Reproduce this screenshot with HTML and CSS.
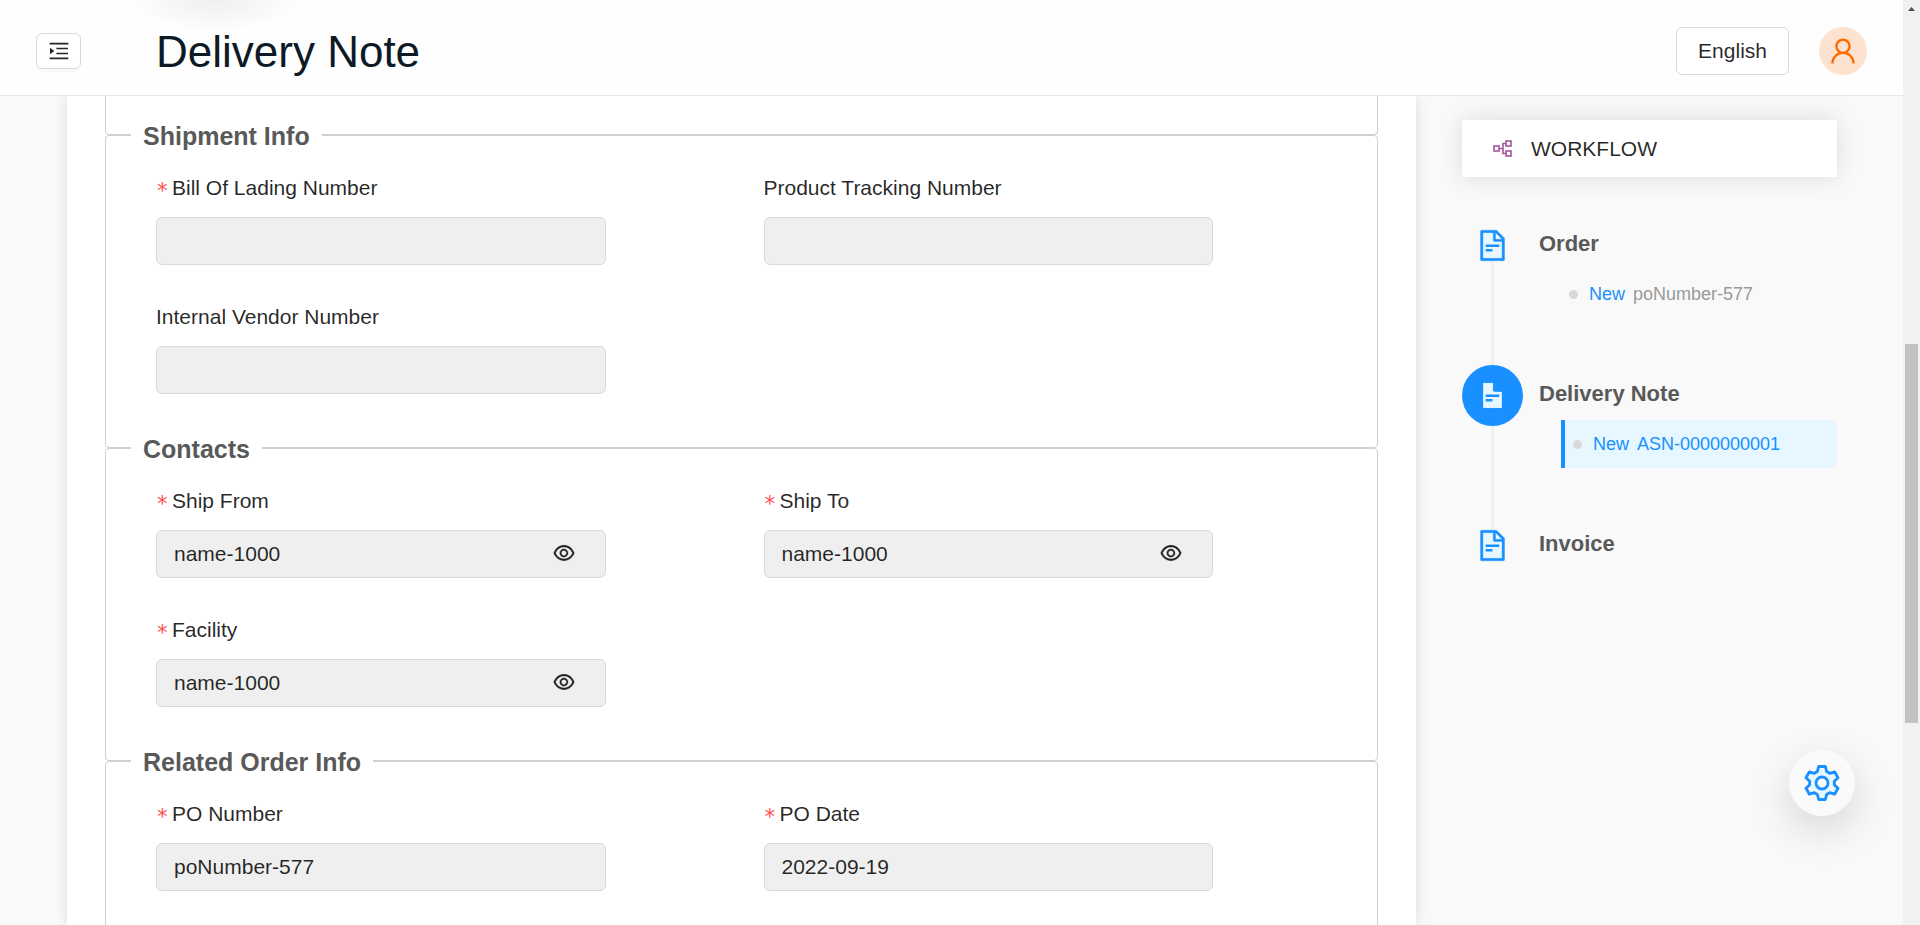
FILE: index.html
```html
<!DOCTYPE html>
<html lang="en">
<head>
    <meta charset="UTF-8">
    <meta name="viewport" content="width=device-width, initial-scale=1.0">
    <title>Delivery Note</title>
    <link rel="stylesheet" href="styles.css">
</head>
<body>
    <!-- shared icons -->
    <svg class="icon-defs" aria-hidden="true">
        <symbol id="icon-file" viewBox="0 0 1024 1024">
            <path fill="#e6f7ff" d="M534 352V136H232v752h560V394H576a42 42 0 01-42-42z"/>
            <path fill="#1890ff" stroke="#1890ff" stroke-width="10" d="M854.6 288.6L639.4 73.4c-6-6-14.1-9.4-22.6-9.4H192c-17.7 0-32 14.3-32 32v832c0 17.7 14.3 32 32 32h640c17.7 0 32-14.3 32-32V311.3c0-8.5-3.4-16.7-9.4-22.7zM602 137.8L790.2 326H602V137.8zM792 888H232V136h302v216a42 42 0 0042 42h216v494z"/>
            <path fill="#1890ff" d="M320 482h384c4.4 0 8 3.6 8 8v56c0 4.4-3.6 8-8 8H320c-4.4 0-8-3.6-8-8v-56c0-4.4 3.6-8 8-8zM320 618h184c4.4 0 8 3.6 8 8v56c0 4.4-3.6 8-8 8H320c-4.4 0-8-3.6-8-8v-56c0-4.4 3.6-8 8-8z"/>
        </symbol>
        <symbol id="icon-eye" viewBox="0 0 1024 1024">
            <path fill="currentColor" stroke="currentColor" stroke-width="14" d="M942.2 486.2C847.4 286.5 704.1 186 512 186c-192.2 0-335.4 100.5-430.2 300.3a60.3 60.3 0 000 51.5C176.6 737.5 319.9 838 512 838c192.2 0 335.4-100.5 430.2-300.3 7.7-16.2 7.7-35 0-51.5zM512 766c-161.3 0-279.4-81.8-362.7-254C232.6 339.8 350.7 258 512 258c161.3 0 279.4 81.8 362.7 254C791.5 684.2 673.4 766 512 766zm-4-430c-97.2 0-176 78.8-176 176s78.8 176 176 176 176-78.8 176-176-78.8-176-176-176zm0 288c-61.9 0-112-50.1-112-112s50.1-112 112-112 112 50.1 112 112-50.1 112-112 112z"/>
        </symbol>
    </svg>

    <div class="app">
        <header class="header">
            <button type="button" class="menu-btn" aria-label="Toggle menu">
                <svg class="menu-icon" viewBox="0 0 1024 1024">
                    <path fill="currentColor" d="M408 442h480c4.4 0 8-3.6 8-8v-56c0-4.4-3.6-8-8-8H408c-4.4 0-8 3.6-8 8v56c0 4.4 3.6 8 8 8zm-8 204c0 4.4 3.6 8 8 8h480c4.4 0 8-3.6 8-8v-56c0-4.4-3.6-8-8-8H408c-4.4 0-8 3.6-8 8v56zm504-486H120c-4.4 0-8 3.6-8 8v56c0 4.4 3.6 8 8 8h784c4.4 0 8-3.6 8-8v-56c0-4.4-3.6-8-8-8zm0 632H120c-4.4 0-8 3.6-8 8v56c0 4.4 3.6 8 8 8h784c4.4 0 8-3.6 8-8v-56c0-4.4-3.6-8-8-8zM142.4 642.1L298.7 519a8.84 8.84 0 000-13.9L142.4 381.9c-5.8-4.6-14.4-.5-14.4 6.9v246.3a8.9 8.9 0 0014.4 7z"/>
                </svg>
            </button>
            <h1 class="page-title">Delivery Note</h1>
            <button type="button" class="lang-btn">English</button>
            <button type="button" class="avatar" aria-label="Account">
                <svg class="avatar-icon" viewBox="0 0 1024 1024">
                    <path fill="currentColor" d="M858.5 763.6a374 374 0 00-80.6-119.5 375.63 375.63 0 00-119.5-80.6c-.4-.2-.8-.3-1.2-.5C719.5 518 760 444.7 760 362c0-137-111-248-248-248S264 225 264 362c0 82.7 40.5 156 102.8 201.1-.4.2-.8.3-1.2.5-44.8 18.9-85 46-119.5 80.6a375.63 375.63 0 00-80.6 119.5A371.7 371.7 0 00136 901.8a8 8 0 008 8.2h60c4.4 0 7.9-3.5 8-7.8 2-77.2 33-149.5 87.8-204.3 56.7-56.7 132-87.9 212.2-87.9s155.5 31.2 212.2 87.9C779 752.7 810 825 812 902.2c.1 4.4 3.6 7.8 8 7.8h60a8 8 0 008-8.2c-1-47.8-10.9-94.3-29.5-138.2zM512 534c-45.9 0-89.1-17.9-121.6-50.4S340 407.9 340 362c0-45.9 17.9-89.1 50.4-121.6S466.1 190 512 190s89.1 17.9 121.6 50.4S684 316.1 684 362c0 45.9-17.9 89.1-50.4 121.6S557.9 534 512 534z"/>
                </svg>
            </button>
        </header>

        <div class="content">
            <main class="sheet">
                <form>
                    <div class="section-end"></div>

                    <fieldset class="section">
                        <legend class="section-title">Shipment Info</legend>
                        <div class="fields">
                            <div class="field">
                                <label class="field-label" for="bol"><span class="required">*</span>Bill Of Lading Number</label>
                                <input type="text" class="field-input" id="bol" readonly>
                            </div>
                            <div class="field">
                                <label class="field-label" for="tracking">Product Tracking Number</label>
                                <input type="text" class="field-input" id="tracking" readonly>
                            </div>
                            <div class="field">
                                <label class="field-label" for="vendor">Internal Vendor Number</label>
                                <input type="text" class="field-input" id="vendor" readonly>
                            </div>
                        </div>
                    </fieldset>

                    <fieldset class="section">
                        <legend class="section-title">Contacts</legend>
                        <div class="fields">
                            <div class="field">
                                <label class="field-label" for="shipFrom"><span class="required">*</span>Ship From</label>
                                <div class="field-control">
                                    <input type="text" class="field-input" id="shipFrom" value="name-1000" readonly>
                                    <button type="button" class="view-btn" aria-label="View ship from"><svg class="eye-icon"><use href="#icon-eye"/></svg></button>
                                </div>
                            </div>
                            <div class="field">
                                <label class="field-label" for="shipTo"><span class="required">*</span>Ship To</label>
                                <div class="field-control">
                                    <input type="text" class="field-input" id="shipTo" value="name-1000" readonly>
                                    <button type="button" class="view-btn" aria-label="View ship to"><svg class="eye-icon"><use href="#icon-eye"/></svg></button>
                                </div>
                            </div>
                            <div class="field">
                                <label class="field-label" for="facility"><span class="required">*</span>Facility</label>
                                <div class="field-control">
                                    <input type="text" class="field-input" id="facility" value="name-1000" readonly>
                                    <button type="button" class="view-btn" aria-label="View facility"><svg class="eye-icon"><use href="#icon-eye"/></svg></button>
                                </div>
                            </div>
                        </div>
                    </fieldset>

                    <fieldset class="section">
                        <legend class="section-title">Related Order Info</legend>
                        <div class="fields">
                            <div class="field">
                                <label class="field-label" for="poNumber"><span class="required">*</span>PO Number</label>
                                <input type="text" class="field-input" id="poNumber" value="poNumber-577" readonly>
                            </div>
                            <div class="field">
                                <label class="field-label" for="poDate"><span class="required">*</span>PO Date</label>
                                <input type="text" class="field-input" id="poDate" value="2022-09-19" readonly>
                            </div>
                        </div>
                    </fieldset>
                </form>
            </main>

            <aside class="sidebar">
                <div class="workflow-card">
                    <svg class="workflow-icon" viewBox="0 0 20 18" fill="none" stroke="#a6559a" stroke-width="1.6">
                        <rect x="1" y="6" width="5" height="5"/>
                        <rect x="13" y="1" width="5" height="5"/>
                        <rect x="13" y="11" width="5" height="5"/>
                        <path d="M6 8.500h4M13 3.500h-3v10h3"/>
                    </svg>
                    <span>WORKFLOW</span>
                </div>

                <ol class="steps">
                    <li class="step">
                        <div class="step-icon"><svg class="file-icon"><use href="#icon-file"/></svg></div>
                        <div class="step-body">
                            <h2 class="step-title">Order</h2>
                            <a href="#" class="step-doc"><span class="status">New</span><span>poNumber-577</span></a>
                        </div>
                    </li>
                    <li class="step active">
                        <div class="step-icon"><svg class="file-icon"><use href="#icon-file"/></svg></div>
                        <div class="step-body">
                            <h2 class="step-title">Delivery Note</h2>
                            <a href="#" class="step-doc"><span class="status">New</span><span>ASN-0000000001</span></a>
                        </div>
                    </li>
                    <li class="step">
                        <div class="step-icon"><svg class="file-icon"><use href="#icon-file"/></svg></div>
                        <div class="step-body">
                            <h2 class="step-title">Invoice</h2>
                        </div>
                    </li>
                </ol>
            </aside>
        </div>

        <button type="button" class="settings-btn" aria-label="Settings">
            <svg class="settings-icon" viewBox="-18 -18 36 36" stroke="#1890ff" stroke-width="2.8" stroke-linejoin="round">
                <path fill="#e6f7ff" d="M-4.6-11.5L-3.4-16.5H3.4L4.6-11.5L7.7-9.7L12.6-11.2L16-5.3L12.3-1.8V1.8L16 5.3L12.6 11.2L7.7 9.7L4.6 11.5L3.4 16.5H-3.4L-4.6 11.5L-7.7 9.7L-12.6 11.2L-16 5.3L-12.3 1.8V-1.8L-16-5.3L-12.6-11.2L-7.7-9.7Z"/>
                <circle r="6" fill="#fafafa"/>
            </svg>
        </button>
    </div>

    <div class="scrollbar" aria-hidden="true">
        <div class="scrollbar-arrow"></div>
        <div class="scrollbar-thumb"></div>
    </div>
</body>
</html>
```
FILE: styles.css
```css
* {
    margin: 0;
    padding: 0;
    box-sizing: border-box;
}

body {
    display: flex;
    height: 100vh;
    overflow: hidden;
    font-family: "Liberation Sans", Arial, sans-serif;
    font-size: 21px;
    color: rgba(0, 0, 0, 0.85);
    background: #f9f9f9;
}

button,
input {
    font: inherit;
    color: inherit;
}

button {
    display: flex;
    align-items: center;
    justify-content: center;
    cursor: pointer;
}

.icon-defs {
    position: absolute;
    width: 0;
    height: 0;
}

.app {
    flex: 1;
    min-width: 0;
    display: flex;
    flex-direction: column;
}

/* header */
.header {
    flex: none;
    display: flex;
    align-items: center;
    height: 96px;
    padding: 6px 36px 0;
    border-bottom: 1px solid #e6e6e6;
    background: radial-gradient(ellipse 85px 32px at 215px 0, #efefef, rgba(255, 255, 255, 0)), #fefefe;
}

.menu-btn {
    width: 45px;
    height: 36px;
    border: 1px solid #d9d9d9;
    border-radius: 6px;
    background: #fff;
    box-shadow: 0 3px 0 rgba(0, 0, 0, 0.02);
}

.menu-icon {
    width: 24px;
    height: 24px;
}

.page-title {
    flex: 1;
    margin-left: 75px;
    padding-top: 2px;
    font-size: 44px;
    font-weight: 400;
    color: #0d1a26;
}

.lang-btn {
    height: 48px;
    padding: 0 21px;
    border: 1px solid #d9d9d9;
    border-radius: 6px;
    background: #fff;
}

.avatar {
    width: 48px;
    height: 48px;
    margin-left: 30px;
    border: none;
    border-radius: 50%;
    color: #ff6a00;
    background: #fde3cf;
}

.avatar-icon {
    width: 32px;
    height: 32px;
}

/* layout */
.content {
    flex: 1;
    min-height: 0;
    display: flex;
    gap: 46px;
    padding: 0 66px 0 67px;
    overflow: hidden;
}

.sheet {
    flex: 1;
    min-width: 0;
    padding: 0 38px;
    background: #fff;
    box-shadow: 0 0 12px rgba(20, 20, 60, 0.12);
}

/* form sections */
.section-end {
    height: 39px;
    border: 1px solid #d0d0d0;
    border-top: none;
    border-radius: 0 0 4px 4px;
}

.section {
    margin-top: -15px;
    padding: 16px 6px 22px 50px;
    border: 1px solid #d0d0d0;
    border-radius: 4px;
}

.section-title {
    margin-left: -25px;
    padding: 3px 12px 2px;
    font-size: 25px;
    font-weight: 700;
    line-height: 26px;
    color: #595959;
    background: #fff;
}

.fields {
    display: grid;
    grid-template-columns: 1fr 1fr;
}

.field {
    width: 74%;
    margin-bottom: 31px;
}

.field-label {
    display: flex;
    align-items: center;
    height: 42px;
    margin-bottom: 8px;
}

.required {
    width: 16px;
    padding-top: 6px;
    font-family: "DejaVu Sans Mono", monospace;
    font-size: 21px;
    line-height: 24px;
    color: #ff4d4f;
}

.field-control {
    position: relative;
}

.field-input {
    display: block;
    width: 100%;
    height: 48px;
    padding: 0 17px;
    border: 1px solid #d9d9d9;
    border-radius: 6px;
    outline: none;
    background: #efefef;
}

.view-btn {
    position: absolute;
    top: 0;
    right: 30px;
    height: 46px;
    border: none;
    background: none;
}

.eye-icon {
    width: 24px;
    height: 24px;
}

/* workflow sidebar */
.sidebar {
    flex: none;
    width: 375px;
    padding-top: 24px;
}

.workflow-card {
    display: flex;
    align-items: center;
    gap: 18px;
    height: 57px;
    padding: 0 31px;
    background: #fff;
    box-shadow: 0 0 24px rgba(0, 0, 0, 0.12);
}

.workflow-icon {
    width: 20px;
    height: 18px;
}

.steps {
    margin-top: 38px;
    list-style: none;
}

.step {
    position: relative;
    display: flex;
    gap: 16px;
    height: 150px;
}

.step:not(:last-child)::before {
    content: "";
    position: absolute;
    top: 46px;
    left: 29px;
    width: 3px;
    height: 120px;
    background: #f0f0f0;
}

.step-icon {
    position: relative;
    display: flex;
    align-items: center;
    justify-content: center;
    width: 61px;
    height: 61px;
    border-radius: 50%;
}

.step.active .step-icon {
    background: #1890ff;
}

.file-icon {
    width: 35px;
    height: 35px;
}

.step-body {
    flex: 1;
    padding-top: 5px;
}

.step-title {
    margin-bottom: 2px;
    font-size: 22px;
    line-height: 48px;
    color: #595959;
}

.step-doc {
    display: flex;
    align-items: center;
    gap: 8px;
    height: 48px;
    margin-left: 22px;
    padding-left: 8px;
    border-radius: 0 6px 6px 0;
    font-size: 18px;
    color: #999;
    text-decoration: none;
}

.step-doc::before {
    content: "";
    width: 9px;
    height: 9px;
    margin-right: 3px;
    border-radius: 50%;
    background: #d9d9d9;
}

.status {
    color: #1890ff;
}

.step.active .step-doc {
    border-left: 4px solid #1890ff;
    color: #1890ff;
    background: #e6f7ff;
}

/* floating settings button */
.settings-btn {
    position: fixed;
    right: 65px;
    bottom: 109px;
    width: 66px;
    height: 66px;
    border: none;
    border-radius: 50%;
    background: #fafafa;
    box-shadow: 0 14px 42px rgba(0, 0, 0, 0.15);
}

.settings-icon {
    width: 36px;
    height: 36px;
}

/* scrollbar */
.scrollbar {
    flex: none;
    width: 17px;
    padding: 0 2px;
    background: #f1f1f1;
}

.scrollbar-arrow {
    width: 7px;
    height: 4px;
    margin: 7px auto 0;
    background: #505050;
    clip-path: polygon(50% 0, 100% 100%, 0 100%);
}

.scrollbar-thumb {
    height: 41vh;
    margin-top: 36vh;
    background: #c1c1c1;
}
```
